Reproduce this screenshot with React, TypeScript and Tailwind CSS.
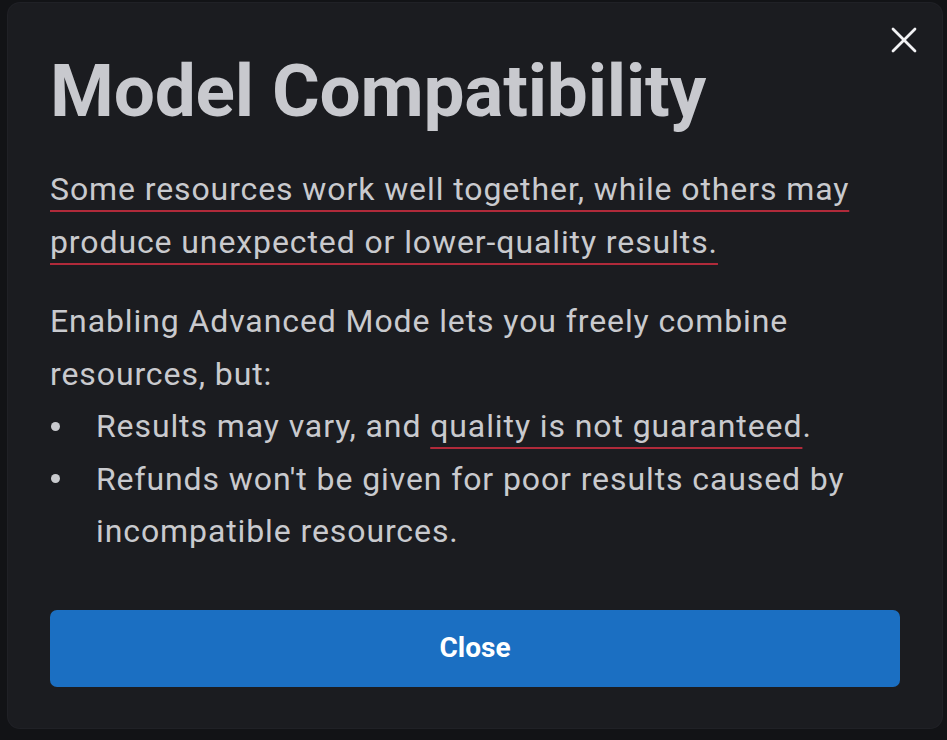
import { X } from "lucide-react";

function Dot() {
  return (
    <span className="w-[46px] shrink-0 flex items-center h-[52.5px] pl-[1px]">
      <span className="w-[9px] h-[9px] rounded-full bg-[#c9cace]" />
    </span>
  );
}

export default function App() {
  return (
    <div
      className="w-[947px] h-[740px] bg-[#121316] overflow-hidden pt-[3px] pl-[8px]"
      style={{ fontFamily: "Roboto, 'Noto Sans', sans-serif" }}
    >
      <div className="relative w-[934px] h-[725px] rounded-[12px] bg-[#1b1c20] px-[42px] pt-[45px] shadow-[0_0_0_1px_#202126]">
        <button className="absolute right-[16px] top-[15px] text-[#f2f2f4]">
          <X size={44} strokeWidth={1.5} />
        </button>
        <h1 className="text-[73px] leading-[86px] font-bold text-[#c8c9ce] tracking-[-0.2px]">
          Model Compatibility
        </h1>
        <p className="mt-[29px] text-[32px] leading-[53px] tracking-[0.9px] text-[#c9cace]">
          <span className="underline decoration-[#b02a3a] decoration-2 underline-offset-[10px]">
            Some resources work well together, while others may produce unexpected or lower-quality results.
          </span>
        </p>
        <p className="mt-[26px] text-[32px] leading-[52.5px] tracking-[0.9px] text-[#c9cace]">
          Enabling Advanced Mode lets you freely combine resources, but:
        </p>
        <ul className="text-[32px] leading-[52.5px] tracking-[0.9px] text-[#c9cace]">
          <li className="flex">
            <Dot />
            <span>
              Results may vary, and{" "}
              <span className="underline decoration-[#b02a3a] decoration-2 underline-offset-[10px]">
                quality is not guaranteed
              </span>
              .
            </span>
          </li>
          <li className="flex">
            <Dot />
            <span>Refunds won't be given for poor results caused by incompatible resources.</span>
          </li>
        </ul>
        <button className="mt-[52px] w-full h-[77px] rounded-[7px] bg-[#1b6fc2] text-white text-[28px] font-bold">
          Close
        </button>
      </div>
    </div>
  );
}
